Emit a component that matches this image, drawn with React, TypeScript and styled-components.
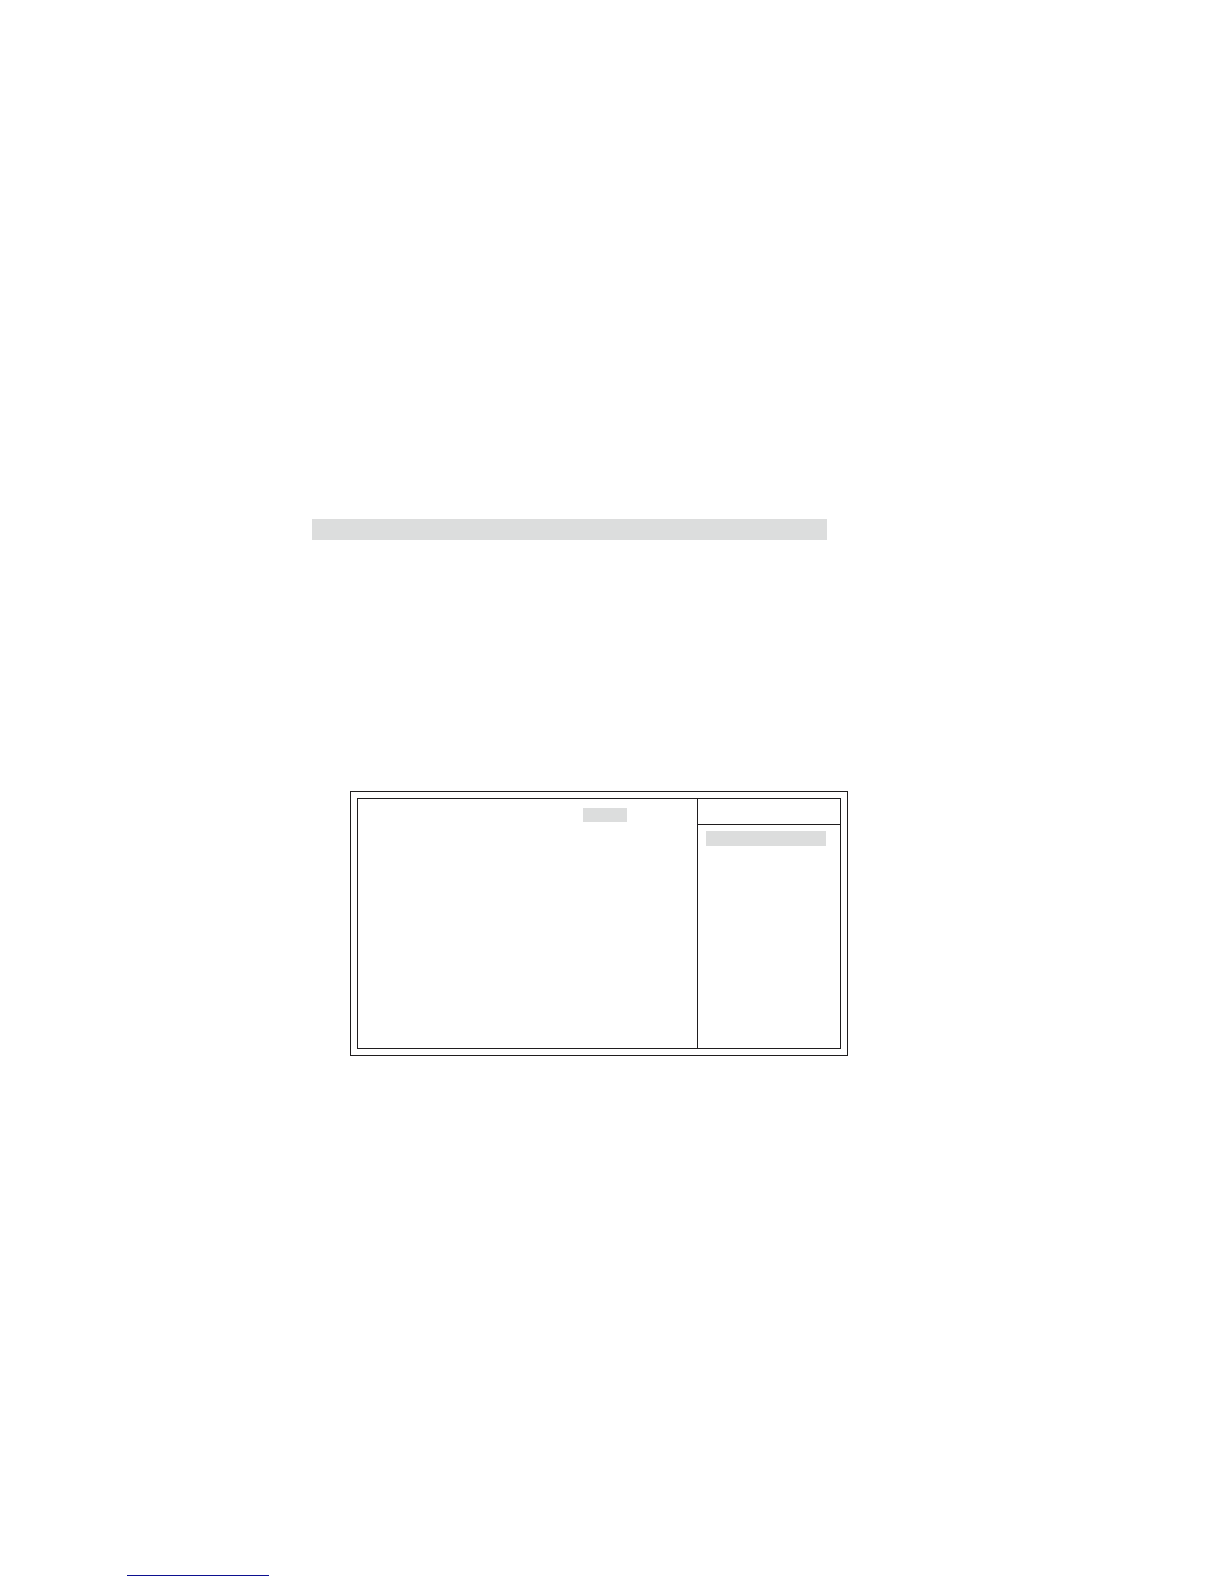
import React from "react";
import styled, { createGlobalStyle } from "styled-components";

const GlobalStyle = createGlobalStyle`
  *, *::before, *::after { box-sizing: border-box; }
  body {
    margin: 0;
    background: #ffffff;
    font-family: "Liberation Sans", Arial, sans-serif;
  }
`;

const line = "#1f1d1e";
const shade = "#dcdddd";

const Page = styled.div`
  display: flex;
  flex-direction: column;
  min-height: 100vh;
  padding: 519px 0 8px;
`;

const Content = styled.main`
  display: flex;
  flex-direction: column;
  gap: 251px;
  padding: 0 376px 0 312px;
`;

const HeadingBand = styled.div`
  height: 21px;
  margin-right: 21px;
  background: ${shade};
`;

const Frame = styled.section`
  margin-left: 38px;
  padding: 6px;
  border: 1px solid ${line};
`;

const Screen = styled.div`
  display: grid;
  grid-template-columns: minmax(0, 1fr) 143px;
  min-height: 251px;
  border: 1px solid ${line};
`;

const SettingsPane = styled.div`
  display: flex;
  justify-content: flex-end;
  align-items: flex-start;
  padding: 9px 70px 0 0;
`;

const HelpPane = styled.aside`
  display: flex;
  flex-direction: column;
  border-left: 1px solid ${line};
`;

const HelpHeader = styled.header`
  height: 26px;
  border-bottom: 1px solid ${line};
`;

const HelpBody = styled.div`
  padding: 6px 14px 0 8px;
`;

const SelectedValue = styled.div`
  width: 44px;
  height: 14px;
  background: ${shade};
`;

const SelectedRow = styled.div`
  height: 15px;
  background: ${shade};
`;

const Footer = styled.footer`
  margin-top: auto;
  padding-left: 127px;
`;

const FooterRule = styled.hr`
  width: 142px;
  height: 1px;
  margin: 0;
  border: 0;
  background: #0c1090;
`;

export default function App() {
  return (
    <>
      <GlobalStyle />
      <Page>
        <Content>
          <HeadingBand />
          <Frame>
            <Screen>
              <SettingsPane>
                <SelectedValue />
              </SettingsPane>
              <HelpPane>
                <HelpHeader />
                <HelpBody>
                  <SelectedRow />
                </HelpBody>
              </HelpPane>
            </Screen>
          </Frame>
        </Content>
        <Footer>
          <FooterRule />
        </Footer>
      </Page>
    </>
  );
}
